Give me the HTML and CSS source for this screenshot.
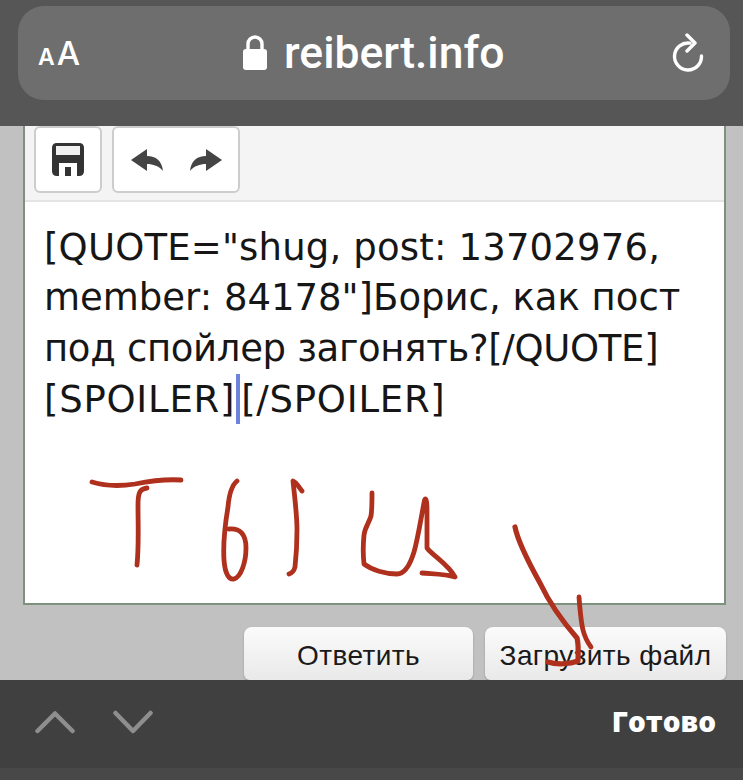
FILE: index.html
```html
<!DOCTYPE html>
<html lang="ru">
<head>
<meta charset="utf-8">
<title>reibert.info</title>
<link rel="stylesheet" href="styles.css">
</head>
<body>
<div class="screen">
  <header class="topbar">
    <div class="pill">
      <div class="aa"><span class="aa-small">A</span><span class="aa-big">A</span></div>
      <div class="address">
        <svg class="lock" viewBox="0 0 26 36" width="26" height="36"><path d="M6 16V10a7 7 0 0 1 14 0v6" fill="none" stroke="#fff" stroke-width="3.4"/><rect x="1" y="15" width="24" height="21" rx="3" fill="#fff"/></svg>
        <span class="host">reibert.info</span>
      </div>
      <svg class="reload" viewBox="0 0 34 40" width="34" height="40"><path d="M19 10.100A13.500 13.500 0 1 0 30.500 23" fill="none" stroke="#fff" stroke-width="3.400" stroke-linecap="round"/><path d="M16 2L24 10L16 18" fill="none" stroke="#fff" stroke-width="3.400" stroke-linecap="round" stroke-linejoin="round"/></svg>
    </div>
  </header>
  <main class="page">
    <section class="editor">
      <div class="toolbar">
        <div class="tool tool-save">
          <svg class="tool-icon" viewBox="0 0 32 33" width="32" height="33"><path fill="#333" d="M5 0H27Q32 0 32 5V28Q32 33 27 33H5Q0 33 0 28V5Q0 0 5 0Z"/><rect x="4" y="3" width="24" height="9" fill="#f0f0f0"/><path fill="#fff" d="M7 33V20H25V33H19V24H13V33Z"/></svg>
        </div>
        <div class="tool tool-history">
          <svg class="tool-icon" viewBox="0 0 32 22" width="32" height="22"><path fill="#444" d="M16 0L0 11L16 22V15C22 15 28 17 32 22C31 12 25 7 16 7Z"/></svg>
          <svg class="tool-icon" viewBox="0 0 32 22" width="32" height="22"><path fill="#444" d="M16 0L32 11L16 22V15C10 15 4 17 0 22C1 12 7 7 16 7Z"/></svg>
        </div>
      </div>
      <div class="content">
        <div class="line line-first">[QUOTE="shug, post: 13702976,</div>
        <div class="line">member: 84178"]Борис, как пост</div>
        <div class="line line-third">под спойлер загонять?[/QUOTE]</div>
        <div class="line line-last">[SPOILER]<span class="caret"></span>[/SPOILER]</div>
      </div>
    </section>
    <div class="actions">
      <div class="btn btn-reply">Ответить</div>
      <div class="btn btn-upload">Загрузить файл</div>
    </div>
  </main>
  <footer class="bottom">
    <div class="keybar">
      <svg class="chev" viewBox="0 0 40 24" width="40" height="24"><path d="M2.500 21L20 3.500L37.500 21" fill="none" stroke="#8e8e8e" stroke-width="4.500" stroke-linecap="round" stroke-linejoin="round"/></svg>
      <svg class="chev" viewBox="0 0 40 24" width="40" height="24"><path d="M2.500 3L20 21L37.500 3" fill="none" stroke="#8e8e8e" stroke-width="4.500" stroke-linecap="round" stroke-linejoin="round"/></svg>
      <span class="done">Готово</span>
    </div>
    <div class="strip"></div>
  </footer>
  <svg class="scribble" viewBox="0 0 743 780" width="743" height="780">
    <path d="M92 482C105 486 122 486 135 484C150 481 165 479 181 480"/>
    <path d="M147 488C140 489 138 492 138 505C138 525 139 545 137 565"/>
    <path d="M237 481C231 486 229 495 228 507C225 525 223 545 224 560C225 574 229 580 234 579C241 577 246 562 246 548C246 534 240 528 229 529"/>
    <path d="M302 491C299 487 296 482 293 481C295 500 297 515 297 530C297 545 296 558 295 567C294 571 292 573 289 574"/>
    <path d="M372 493C372 503 372 510 371 516C369 523 365 527 364 535C363 545 363 555 364 564C372 570 385 574 397 574C405 574 410 565 414 552C418 538 421 518 424 503C425 496 427 498 427 510C427 525 427 538 427 548C433 556 448 564 455 577C445 574 432 574 422 573"/>
    <path class="thick" d="M515 527C518 542 530 565 540 583C548 600 563 622 577 638C579 646 578 654 578 661C570 664 557 665 548 662"/>
    <path d="M579 597C580 610 581 622 583 630C585 638 588 643 591 647"/>
  </svg>
</div>
</body>
</html>
```
FILE: styles.css
```css
* { box-sizing: border-box; }
html, body { margin: 0; padding: 0; }
body { width: 743px; height: 780px; overflow: hidden; font-family: "Liberation Sans", Arial, sans-serif; }
.screen { position: relative; width: 743px; height: 780px; display: flex; flex-direction: column; background: #c1c1c1; overflow: hidden; }

.topbar { height: 126px; flex: none; background: #565656; padding: 6px 13px 0 18px; }
.pill { height: 94px; border-radius: 26px; background: #6e6e6e; display: flex; align-items: center; padding: 0 25px 0 20px; position: relative; }
.aa { color: #fff; font-family: Inter, "Liberation Sans", sans-serif; display: flex; align-items: baseline; gap: 2px; width: 40px; font-weight: 500; }
.aa-small { font-size: 23px; font-weight: 600; }
.aa-big { font-size: 33px; }
.address { display: flex; align-items: center; gap: 16px; margin-left: 164px; }
.lock { display: block; margin-top: -2px; }
.host { color: #fff; font-family: Roboto, "Liberation Sans", sans-serif; font-size: 44.500px; line-height: 50px; font-weight: 500; }
.reload { margin-left: auto; display: block; }

.page { flex: 1; min-height: 0; display: flex; flex-direction: column; padding-left: 23px; }
.editor { width: 703px; height: 479px; flex: none; border: 2px solid #7d917d; border-top: 0; background: #fff; display: flex; flex-direction: column; }
.toolbar { height: 76px; flex: none; background: #f4f4f4; border-bottom: 2px solid #e4e4e4; display: flex; gap: 10px; padding-left: 9px; }
.tool { height: 67px; background: #fff; border: 2px solid #cdcdcd; border-radius: 6px; display: flex; align-items: center; justify-content: center; }
.tool-save { width: 68px; }
.tool-history { width: 128px; gap: 27px; }
.tool-icon { display: block; filter: blur(.6px); }
.content { padding: 21px 0 0 19px; font-family: "DejaVu Sans", Verdana, sans-serif; font-size: 37px; line-height: 50.300px; color: #161616; white-space: nowrap; }
.line { height: 50.300px; }
.line-first { letter-spacing: .17px; }
.line-third { letter-spacing: -.32px; }
.line-last { letter-spacing: .75px; }
.caret { display: inline-block; width: 4px; height: 50px; background: #6c84dc; vertical-align: -12px; margin: 0 1px 0 1px; }

.actions { display: flex; gap: 12px; padding: 22px 0 0 221px; }
.btn { height: 53px; border-radius: 8px 8px 6px 6px; background: linear-gradient(#fbfbfb, #e9e9e9); box-shadow: 0 1px 2px rgba(0,0,0,.25); color: #1a1a1a; font-size: 28px; letter-spacing: .4px; display: flex; align-items: center; justify-content: center; padding-top: 4px; }
.btn-reply { width: 229px; }
.btn-upload { width: 241px; }

.bottom { flex: none; position: absolute; left: 0; right: 0; bottom: 0; }
.keybar { height: 88px; background: #404040; display: flex; align-items: center; padding: 0 27px 0 35px; gap: 38px; }
.chev { display: block; margin-top: -5px; }
.done { margin-left: auto; color: #fff; font-family: "Open Sans", "Liberation Sans", sans-serif; font-weight: 800; font-size: 28px; margin-top: -6px; }
.strip { height: 12px; background: #484848; }

.scribble { position: absolute; left: 0; top: 0; pointer-events: none; }
.scribble path { fill: none; stroke: #ae301d; stroke-width: 4.800px; stroke-linecap: round; stroke-linejoin: round; }
.scribble .thick { stroke-width: 5.200px; }
```
